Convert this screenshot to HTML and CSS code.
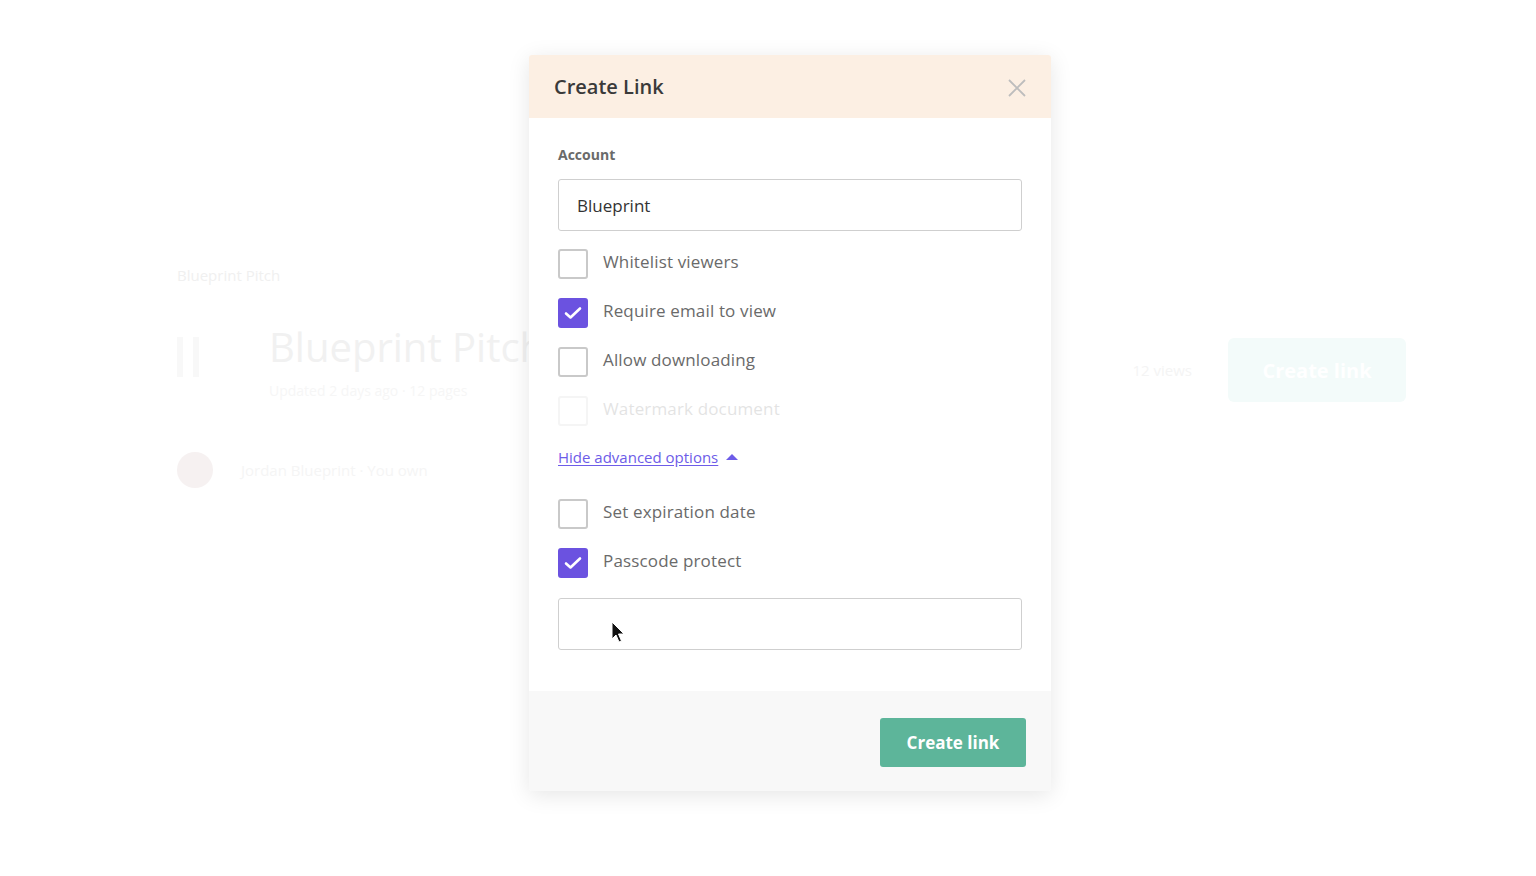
FILE: index.html
```html
<!DOCTYPE html>
<html>
<head>
<meta charset="utf-8">
<link rel="stylesheet" href="styles.css">
</head>
<body>
<div class="page">
  <div class="crumb">Blueprint Pitch</div>
  <div class="doc-row">
    <div class="doc-left">
      <div class="doc-icon"><span></span><span></span></div>
      <div class="doc-text">
        <div class="doc-title">Blueprint Pitch</div>
        <div class="doc-sub">Updated 2 days ago · 12 pages</div>
      </div>
    </div>
    <div class="doc-right">
      <span class="doc-views">12 views</span>
      <span class="bg-btn">Create link</span>
    </div>
  </div>
  <div class="owner-row">
    <span class="avatar"></span>
    <span class="owner">Jordan Blueprint · You own</span>
  </div>
</div>

<div class="modal">
  <div class="modal-head">
    <h2 class="modal-title">Create Link</h2>
    <svg class="close" width="18" height="18" viewBox="0 0 18 18"><path d="M1 1L17 17M17 1L1 17" stroke="#bdbdbd" stroke-width="1.8" fill="none"/></svg>
  </div>
  <div class="modal-body">
    <div class="label">Account</div>
    <div class="field">Blueprint</div>
    <div class="checks">
      <div class="check"><span class="box"></span><span class="ctext">Whitelist viewers</span></div>
      <div class="check"><span class="box on"><svg width="18" height="14" viewBox="0 0 18 14"><path d="M2 7.5L6.5 11.5L16 2.5" stroke="#fff" stroke-width="2.6" fill="none" stroke-linecap="round" stroke-linejoin="round"/></svg></span><span class="ctext">Require email to view</span></div>
      <div class="check"><span class="box"></span><span class="ctext">Allow downloading</span></div>
      <div class="check disabled"><span class="box"></span><span class="ctext">Watermark document</span></div>
    </div>
    <div class="adv"><span class="adv-link">Hide advanced options</span><span class="tri"></span></div>
    <div class="checks">
      <div class="check"><span class="box"></span><span class="ctext">Set expiration date</span></div>
      <div class="check"><span class="box on"><svg width="18" height="14" viewBox="0 0 18 14"><path d="M2 7.5L6.5 11.5L16 2.5" stroke="#fff" stroke-width="2.6" fill="none" stroke-linecap="round" stroke-linejoin="round"/></svg></span><span class="ctext">Passcode protect</span></div>
    </div>
    <div class="field empty"></div>
  </div>
  <div class="modal-foot">
    <button class="create">Create link</button>
  </div>
  <svg class="cursor" width="16" height="24" viewBox="0 0 16 24"><path d="M1 1L1 18L5 14L8 21L10.5 20L7.5 13L13 13Z" fill="#111" stroke="#fff" stroke-width="1"/></svg>
</div>
</body>
</html>
```
FILE: styles.css
```css
* { box-sizing: border-box; }
html, body { margin: 0; padding: 0; }
body {
  width: 1536px;
  height: 876px;
  background: #fff;
  font-family: "Open Sans", "Noto Sans", sans-serif;
  position: relative;
  overflow: hidden;
}
.page {
  padding: 265px 130px 0 177px;
  color: #f3f3f3;
}
.crumb { font-size: 15px; color: #f0f0f0; }
.doc-row {
  margin-top: 34px;
  display: flex;
  justify-content: space-between;
  align-items: flex-start;
}
.doc-left { display: flex; gap: 70px; align-items: flex-start; }
.doc-icon { display: flex; gap: 10px; padding-top: 18px; }
.doc-icon span { width: 6px; height: 40px; background: #f8f8f8; display: block; }
.doc-title { font-size: 40px; color: #f1f1f1; line-height: 56px; }
.doc-sub { font-size: 14px; color: #f6f6f6; margin-top: 6px; }
.doc-right { display: flex; align-items: center; gap: 36px; padding-top: 19px; }
.doc-views { font-size: 15px; color: #f4f4f4; }
.bg-btn {
  width: 178px; height: 64px;
  background: #f3fbfa;
  border-radius: 6px;
  display: flex; align-items: center; justify-content: center;
  color: #fff; font-weight: 700; font-size: 20px;
}
.owner-row { margin-top: 50px; display: flex; align-items: center; gap: 28px; }
.avatar { width: 36px; height: 36px; border-radius: 50%; background: #f6f1f1; display: block; }
.owner { font-size: 15px; color: #f5f5f5; }

.modal {
  position: absolute;
  left: 529px;
  top: 55px;
  width: 522px;
  background: #fff;
  box-shadow: 0 4px 22px rgba(0,0,0,0.10);
  border-radius: 3px;
}
.modal-head {
  height: 63px;
  background: #fcefe3;
  display: flex;
  align-items: center;
  justify-content: space-between;
  padding: 0 25px 0 25px;
  border-radius: 3px 3px 0 0;
}
.modal-title {
  margin: 0;
  font-size: 20px;
  font-weight: 600;
  color: #3a3a3a;
}
.close { margin-top: 2px; }
.modal-body {
  padding: 27px 29px 41px 29px;
}
.label {
  font-size: 14px;
  font-weight: 700;
  color: #6a6a6a;
  line-height: 20px;
}
.field {
  margin-top: 14px;
  height: 52px;
  border: 1px solid #cfcfcf;
  border-radius: 3px;
  padding: 0 18px;
  display: flex;
  align-items: center;
  font-size: 17px;
  color: #333;
}
.field.empty { margin-top: 20px; }
.checks { display: flex; flex-direction: column; gap: 19px; margin-top: 18px; }
.check { display: flex; align-items: center; gap: 15px; height: 30px; }
.box {
  width: 30px; height: 30px;
  border: 2px solid #c9c9c9;
  border-radius: 3px;
  display: flex; align-items: center; justify-content: center;
  flex: none;
}
.box.on { background: #6b52e0; border-color: #6b52e0; }
.ctext { font-size: 17px; color: #6a6a6a; margin-top: -5px; letter-spacing: 0.15px; }
.check.disabled { opacity: 0.18; }
.adv {
  margin-top: 21px;
  display: flex; align-items: center; gap: 8px;
  height: 20px;
}
.adv-link {
  font-size: 15px;
  color: #6d5ce8;
  text-decoration: underline;
  text-underline-offset: 2px;
}
.tri {
  width: 0; height: 0;
  border-left: 6px solid transparent;
  border-right: 6px solid transparent;
  border-bottom: 6px solid #6d5ce8;
  margin-top: -1px;
}
.adv + .checks { margin-top: 32px; }
.modal-foot {
  height: 100px;
  background: #f8f8f8;
  display: flex;
  align-items: flex-start;
  justify-content: flex-end;
  padding: 27px 25px 0 0;
  border-radius: 0 0 3px 3px;
}
.create {
  width: 146px; height: 49px;
  background: #5db59a;
  color: #fff;
  border: none;
  border-radius: 3px;
  font-family: "Open Sans", sans-serif;
  font-size: 17px;
  font-weight: 700;
}
.cursor { position: absolute; left: 82px; top: 566px; }
```
